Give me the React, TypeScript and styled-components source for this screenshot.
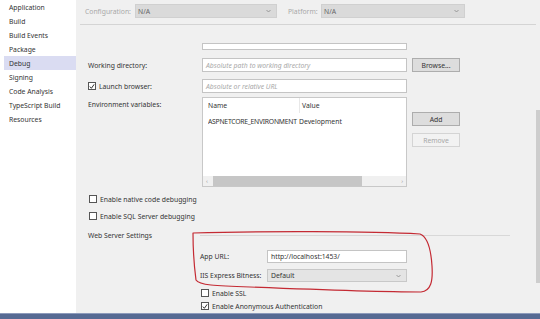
import React from "react";
import styled, { createGlobalStyle } from "styled-components";

const Global = createGlobalStyle`
  html, body { margin: 0; padding: 0; }
  body { width: 540px; height: 319px; overflow: hidden; background: #f0f0f0;
    font-family: "Noto Sans", "Open Sans", sans-serif; font-size: 6.8px; color: #333333; }
  * { box-sizing: border-box; }
`;

const Root = styled.div`
  position: relative;
  width: 540px;
  height: 319px;
  display: flex;
  flex-direction: column;
  overflow: hidden;
`;

const Main = styled.div`
  flex: 1;
  display: flex;
  min-height: 0;
`;

const Sidebar = styled.nav`
  width: 76px;
  background: #ffffff;
  display: flex;
  flex-direction: column;
`;

const NavItem = styled.div<{ $active?: boolean }>`
  height: 14px;
  margin-left: 4px;
  padding-left: 5px;
  display: flex;
  align-items: center;
  background: ${(p) => (p.$active ? "#dadcf2" : "transparent")};
  color: #333;
  white-space: nowrap;
`;

const Content = styled.div`
  flex: 1;
  display: flex;
  min-width: 0;
`;

const Page = styled.div`
  flex: 1;
  display: flex;
  flex-direction: column;
`;

const TopBar = styled.div`
  height: 25px;
  margin-left: 4px;
  padding: 4px 0 0 5px;
  display: flex;
  align-items: flex-start;
  border-bottom: 1px solid #d4d4d4;
`;

const TopLabel = styled.span<{ $w: number }>`
  width: ${(p) => p.$w}px;
  height: 14px;
  display: flex;
  align-items: center;
  color: #a8a8a8;
  white-space: nowrap;
`;

const TopSelect = styled.div<{ $w: number; $mr?: number }>`
  width: ${(p) => p.$w}px;
  height: 14px;
  margin-right: ${(p) => p.$mr ?? 0}px;
  background: #dadada;
  border: 1px solid #d0d0d0;
  padding: 0 5px 0 2px;
  display: flex;
  align-items: center;
  justify-content: space-between;
  color: #666;
`;

const Chevron = styled.svg`
  width: 5px;
  height: 4px;
`;

const Form = styled.div`
  padding-left: 12px;
  display: flex;
  flex-direction: column;
`;

const Row = styled.div<{ $mt: number; $h: number }>`
  margin-top: ${(p) => p.$mt}px;
  height: ${(p) => p.$h}px;
  display: flex;
  align-items: flex-start;
`;

const Label = styled.div<{ $w?: number; $h?: number }>`
  width: ${(p) => p.$w ?? 114}px;
  height: ${(p) => p.$h ?? 14}px;
  display: flex;
  align-items: center;
  white-space: nowrap;
  gap: 3px;
`;

const TextBox = styled.div<{ $w?: number; $h?: number; $ph?: boolean }>`
  width: ${(p) => p.$w ?? 205}px;
  height: ${(p) => p.$h ?? 14}px;
  background: #fff;
  border: 1px solid #c4c4c4;
  padding-left: 3px;
  display: flex;
  align-items: center;
  color: ${(p) => (p.$ph ? "#a8a8a8" : "#333")};
  font-style: ${(p) => (p.$ph ? "italic" : "normal")};
  white-space: nowrap;
  overflow: hidden;
`;

const Button = styled.div<{ $disabled?: boolean }>`
  width: 48px;
  height: 14px;
  margin-left: 5px;
  background: ${(p) => (p.$disabled ? "#f2f2f2" : "#dddddd")};
  border: 1px solid ${(p) => (p.$disabled ? "#d4d4d4" : "#adadad")};
  color: ${(p) => (p.$disabled ? "#a6a6a6" : "#333")};
  display: flex;
  align-items: center;
  justify-content: center;
`;

const ButtonCol = styled.div`
  display: flex;
  flex-direction: column;
  padding-top: 15px;
  gap: 7px;
`;

const Table = styled.div`
  width: 205px;
  height: 90px;
  background: #fff;
  border: 1px solid #c8c8c8;
  display: flex;
  flex-direction: column;
`;

const TRow = styled.div<{ $h: number }>`
  height: ${(p) => p.$h}px;
  display: grid;
  grid-template-columns: 91px 1fr;
  padding-left: 5px;
  align-items: center;
  white-space: nowrap;
`;

const Cell = styled.div<{ $tight?: boolean }>`
  letter-spacing: ${(p) => (p.$tight ? "-0.25px" : "0")};
  overflow: hidden;
`;

const HeadCell = styled.div<{ $sep?: boolean }>`
  height: 100%;
  display: flex;
  align-items: center;
  padding-left: ${(p) => (p.$sep ? 2 : 0)}px;
  border-left: ${(p) => (p.$sep ? "1px solid #e8e8e8" : "none")};
`;

const TableBody = styled.div`
  flex: 1;
`;

const HScroll = styled.div`
  height: 10px;
  background: #f0f0f0;
  display: flex;
  align-items: center;
  padding: 0 3px;
  gap: 2px;
  color: #999;
  font-size: 6px;
`;

const Thumb = styled.div`
  width: 149px;
  height: 10px;
  margin-left: 3px;
  background: #c6c6c6;
`;

const ScrollSpacer = styled.div`
  flex: 1;
`;

const CheckRow = styled.div<{ $mt: number; $indent?: number }>`
  margin-top: ${(p) => p.$mt}px;
  margin-left: ${(p) => (p.$indent ?? 0) + 1}px;
  height: 10px;
  display: flex;
  align-items: center;
  gap: 3px;
  white-space: nowrap;
`;

const Box = styled.span`
  width: 8px;
  height: 8px;
  border: 1px solid #555;
  background: #fff;
  display: inline-flex;
  align-items: center;
  justify-content: center;
  flex: none;
`;

const SectionRow = styled.div`
  margin-top: 9px;
  height: 10px;
  display: flex;
  align-items: center;
`;

const SectionTitle = styled.div`
  width: 112px;
  white-space: nowrap;
`;

const SectionLine = styled.div`
  width: 310px;
  height: 1px;
  background: #d8d8d8;
`;

const SubForm = styled.div`
  margin-left: 112px;
  display: flex;
  flex-direction: column;
`;

const Select = styled.div`
  width: 140px;
  height: 13px;
  background: #e4e4e4;
  border: 1px solid #c8c8c8;
  padding: 0 5px 0 3px;
  display: flex;
  align-items: center;
  justify-content: space-between;
`;

const VScroll = styled.div`
  width: 4px;
  display: flex;
  flex-direction: column;
  align-items: stretch;
`;

const VThumb = styled.div`
  margin-top: 110px;
  height: 173px;
  background: #cdcdcd;
`;

const BottomBar = styled.div`
  height: 6px;
  background: #566a93;
  border-top: 1px solid #8d9bbb;
`;

const Annotation = styled.svg`
  position: absolute;
  left: 0;
  top: 0;
  width: 540px;
  height: 319px;
  pointer-events: none;
`;

const Check = () => (
  <svg width="7" height="7" viewBox="0 0 7 7">
    <path d="M1 3.6 L2.8 5.6 L6 1" fill="none" stroke="#222" strokeWidth="1.1" />
  </svg>
);

const ChevronDown = () => (
  <Chevron viewBox="0 0 5 4">
    <path d="M0.5 1 L2.5 3 L4.5 1" fill="none" stroke="#888" strokeWidth="0.8" />
  </Chevron>
);

const navItems = [
  "Application",
  "Build",
  "Build Events",
  "Package",
  "Debug",
  "Signing",
  "Code Analysis",
  "TypeScript Build",
  "Resources",
];

export default function App() {
  return (
    <Root>
      <Global />
      <Main>
        <Sidebar>
          {navItems.map((n) => (
            <NavItem key={n} $active={n === "Debug"}>
              {n}
            </NavItem>
          ))}
        </Sidebar>
        <Content>
          <Page>
            <TopBar>
              <TopLabel $w={50}>Configuration:</TopLabel>
              <TopSelect $w={142} $mr={11}>
                N/A
                <ChevronDown />
              </TopSelect>
              <TopLabel $w={33}>Platform:</TopLabel>
              <TopSelect $w={144}>
                N/A
                <ChevronDown />
              </TopSelect>
            </TopBar>
            <Form>
              <Row $mt={18} $h={7}>
                <Label $h={7} />
                <TextBox $h={7} />
              </Row>
              <Row $mt={8} $h={14}>
                <Label>Working directory:</Label>
                <TextBox $ph>Absolute path to working directory</TextBox>
                <Button>Browse...</Button>
              </Row>
              <Row $mt={7} $h={14}>
                <Label>
                  <Box>
                    <Check />
                  </Box>
                  Launch browser:
                </Label>
                <TextBox $ph>Absolute or relative URL</TextBox>
              </Row>
              <Row $mt={4} $h={90}>
                <Label>Environment variables:</Label>
                <Table>
                  <TRow $h={15}>
                    <HeadCell>Name</HeadCell>
                    <HeadCell $sep>Value</HeadCell>
                  </TRow>
                  <TRow $h={16}>
                    <Cell $tight>ASPNETCORE_ENVIRONMENT</Cell>
                    <Cell>Development</Cell>
                  </TRow>
                  <TableBody />
                  <HScroll>
                    ‹
                    <Thumb />
                    <ScrollSpacer />›
                  </HScroll>
                </Table>
                <ButtonCol>
                  <Button>Add</Button>
                  <Button $disabled>Remove</Button>
                </ButtonCol>
              </Row>
              <CheckRow $mt={7}>
                <Box />
                Enable native code debugging
              </CheckRow>
              <CheckRow $mt={7}>
                <Box />
                Enable SQL Server debugging
              </CheckRow>
              <SectionRow>
                <SectionTitle>Web Server Settings</SectionTitle>
                <SectionLine />
              </SectionRow>
              <SubForm>
                <Row $mt={10} $h={13}>
                  <Label $w={67} $h={13}>
                    App URL:
                  </Label>
                  <TextBox $w={140} $h={13}>
                    http://localhost:1453/
                  </TextBox>
                </Row>
                <Row $mt={6} $h={13}>
                  <Label $w={67} $h={13}>
                    IIS Express Bitness:
                  </Label>
                  <Select>
                    Default
                    <ChevronDown />
                  </Select>
                </Row>
                <CheckRow $mt={6}>
                  <Box />
                  Enable SSL
                </CheckRow>
                <CheckRow $mt={3}>
                  <Box>
                    <Check />
                  </Box>
                  Enable Anonymous Authentication
                </CheckRow>
              </SubForm>
            </Form>
          </Page>
          <VScroll>
            <VThumb />
          </VScroll>
        </Content>
      </Main>
      <BottomBar />
      <Annotation viewBox="0 0 540 319">
        <path
          d="M193,233 C260,231 370,231 420,234 C428,237 431,250 432,266 C433,281 431,291 421,292 C380,292 300,289 250,287 C215,286 199,285 196,280 C194,265 193,246 193,233"
          fill="none"
          stroke="#c42a33"
          strokeWidth="1.2"
          strokeLinecap="round"
        />
      </Annotation>
    </Root>
  );
}
